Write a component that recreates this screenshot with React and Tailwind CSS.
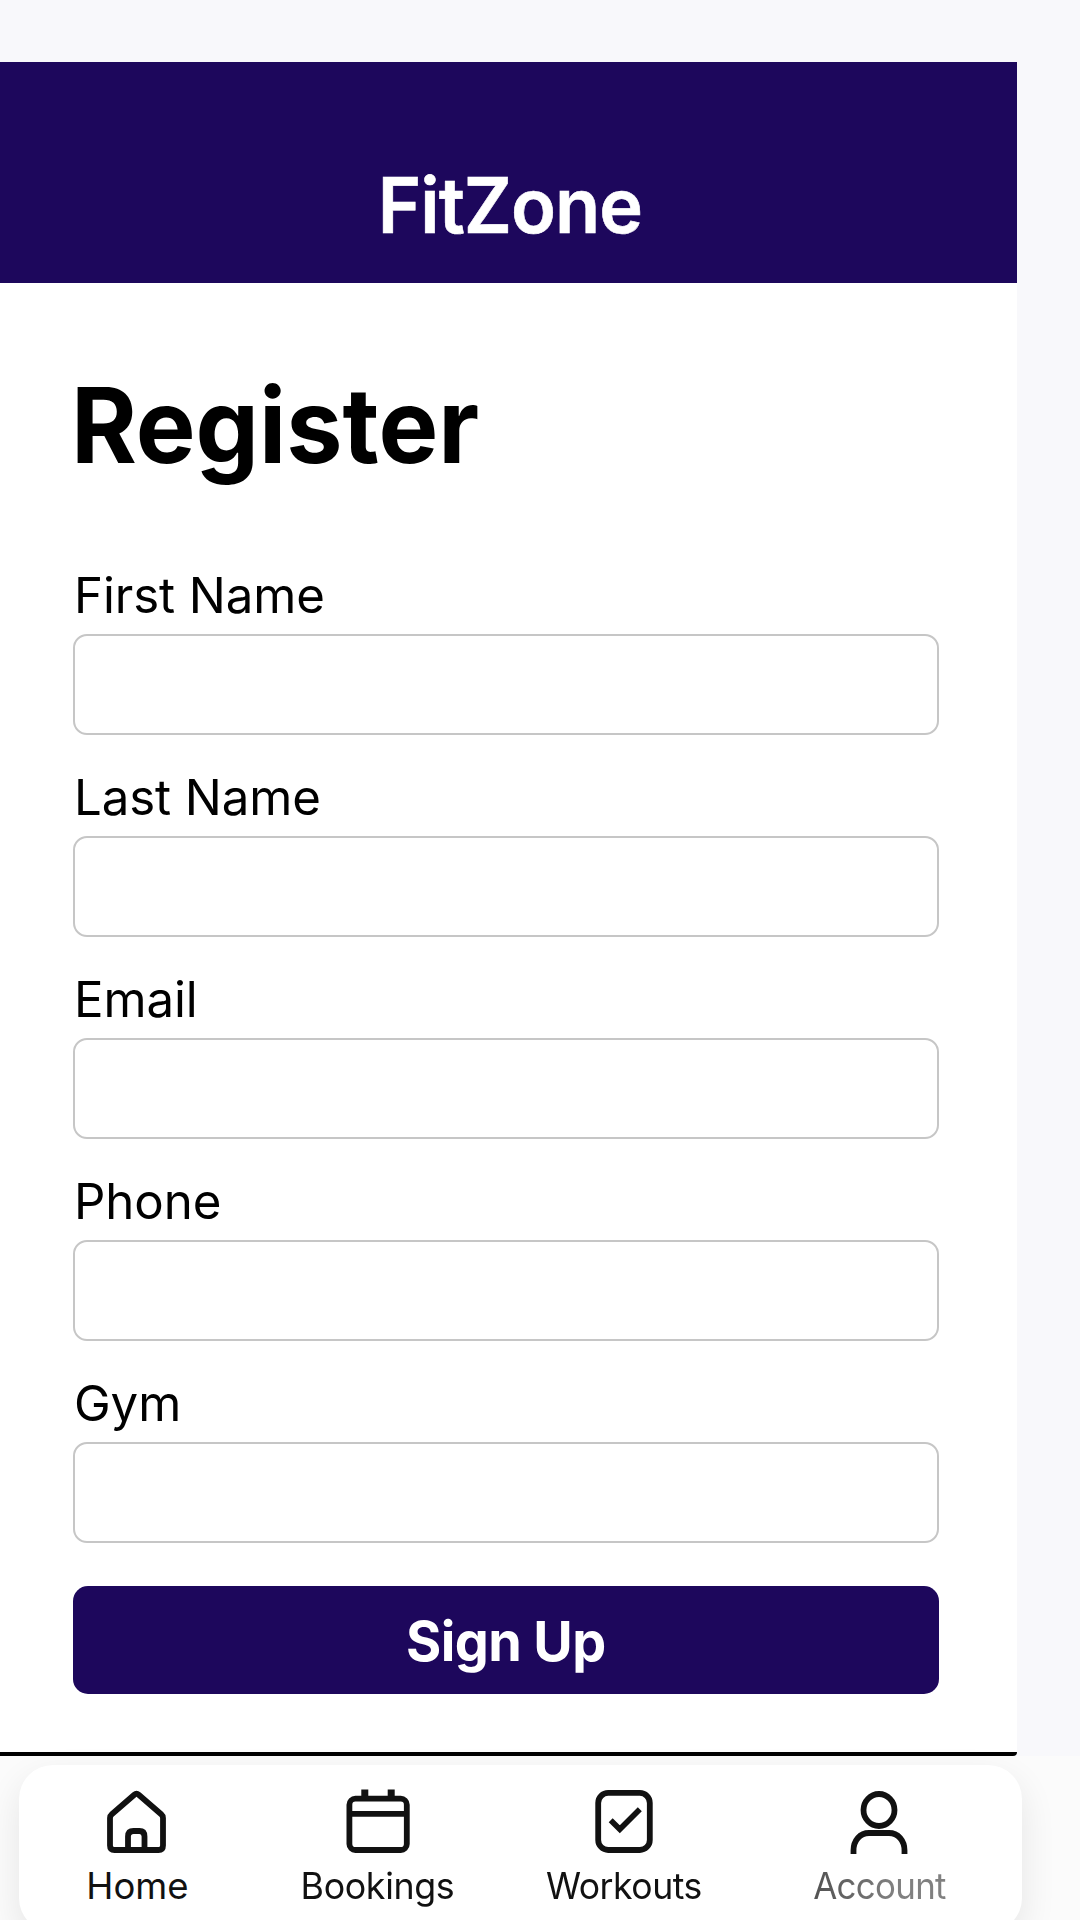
const fields = ["First Name", "Last Name", "Email", "Phone", "Gym"];

const iconProps = {
  width: 70,
  height: 70,
  viewBox: "0 0 70 70",
  fill: "none",
  stroke: "#111111",
  strokeWidth: 5.8,
};

function HomeIcon() {
  return (
    <svg {...iconProps} strokeLinejoin="round" className="-ml-[3px]">
      <path d="M9 30Q9 27.700 10.800 26.200L33.300 6.700Q35.500 4.800 37.700 6.700L60.200 26.200Q62 27.700 62 30V57.500Q62 62 57.500 62H13.500Q9 62 9 57.500Z" />
      <path d="M27 62V48.500Q27 43 32.500 43H38.500Q43.500 43 43.500 48.500V62" />
    </svg>
  );
}

function CalendarIcon() {
  return (
    <svg {...iconProps}>
      <rect x="6.400" y="10.700" width="57.400" height="51.300" rx="6" />
      <path d="M6.400 25.800H63.800" />
      <path d="M21.800 11V1.500M48.200 11V1.500" strokeWidth="7" />
    </svg>
  );
}

function CheckIcon() {
  return (
    <svg {...iconProps} className="-ml-px">
      <rect x="9.200" y="4.900" width="51.600" height="57.100" rx="10" />
      <path d="M21.700 32.200L30.800 41.300L50.800 21.200" strokeWidth="5.600" />
    </svg>
  );
}

function PersonIcon() {
  return (
    <svg {...iconProps} className="-ml-0.5">
      <ellipse cx="35" cy="22" rx="15.500" ry="16" />
      <path d="M9.500 66V62.500C9.500 52.500 16 45 25 45H45C54 45 60.500 52.500 60.500 62.500V66" />
    </svg>
  );
}

const tabs = [
  { label: "Home", Icon: HomeIcon, textClass: "text-[#111111]" },
  { label: "Bookings", Icon: CalendarIcon, textClass: "-ml-[1px] scale-x-[0.98] -tracking-[0.35px] text-[#111111]" },
  { label: "Workouts", Icon: CheckIcon, textClass: "-ml-[2px] scale-x-[0.975] -tracking-[0.5px] text-[#111111]" },
  {
    label: "Account",
    Icon: PersonIcon,
    textClass:
      "scale-x-[0.955] -tracking-[0.7px] bg-linear-to-r from-[#555555] from-5% to-[#808080] to-60% bg-clip-text text-transparent",
  },
];

export default function App() {
  return (
    <div className="flex h-[1920px] w-[1080px] flex-col overflow-hidden bg-[#f8f8fb] pt-[62px] font-['Inter',sans-serif]">
      <div className="flex h-[1694px] w-[1017px] shrink-0 flex-col rounded-br-sm border-b-4 border-black bg-white">
        <header className="h-[221px] shrink-0 bg-[#1d075c] pt-[103px] pl-[2px] text-center">
          <span className="inline-block scale-x-[0.965] text-[76.600px] leading-[80px] font-semibold -tracking-[1px] text-white [-webkit-text-stroke:0.6px_white]">
            FitZone
          </span>
        </header>

        <main className="flex flex-col pt-[82px] pr-[78px] pl-[73px]">
          <h1 className="-ml-[2px] h-[200px] w-fit origin-left scale-x-[0.966] text-[104px] leading-[120px] font-bold text-black">
            Register
          </h1>

          <form className="flex flex-col">
            <div className="flex flex-col gap-8">
              {fields.map((name) => (
                <label key={name} className="flex flex-col gap-[9px]">
                  <span className="pl-px text-[49.200px] leading-[60px] -tracking-[0.1px] text-black">{name}</span>
                  <input className="h-[101px] w-full rounded-[14px] border-2 border-[#c6c6c6] bg-white px-4 text-4xl outline-none" />
                </label>
              ))}
            </div>
            <button
              type="button"
              className="mt-[43px] h-[108px] w-full rounded-[15px] bg-[#1d075c] pt-[2px] text-[55px] leading-[70px] font-bold text-white"
            >
              <span className="inline-block scale-x-[0.98] -tracking-[0.6px]">Sign Up</span>
            </button>
          </form>
        </main>
      </div>

      <div className="flex grow flex-col bg-[#fbfbfb] pt-[9px] pl-[19px]">
        <nav className="grid h-[167px] w-[1003px] shrink-0 grid-cols-[237px_244px_249px_261px] rounded-[34px] bg-white pt-[23px] shadow-[0_14px_36px_rgba(0,0,0,0.09)]">
          {tabs.map(({ label, Icon, textClass }) => (
            <a key={label} className="flex flex-col items-center gap-[6px]">
              <Icon />
              <span className={"text-[36.500px] leading-[44px] " + textClass}>{label}</span>
            </a>
          ))}
        </nav>
      </div>
    </div>
  );
}
